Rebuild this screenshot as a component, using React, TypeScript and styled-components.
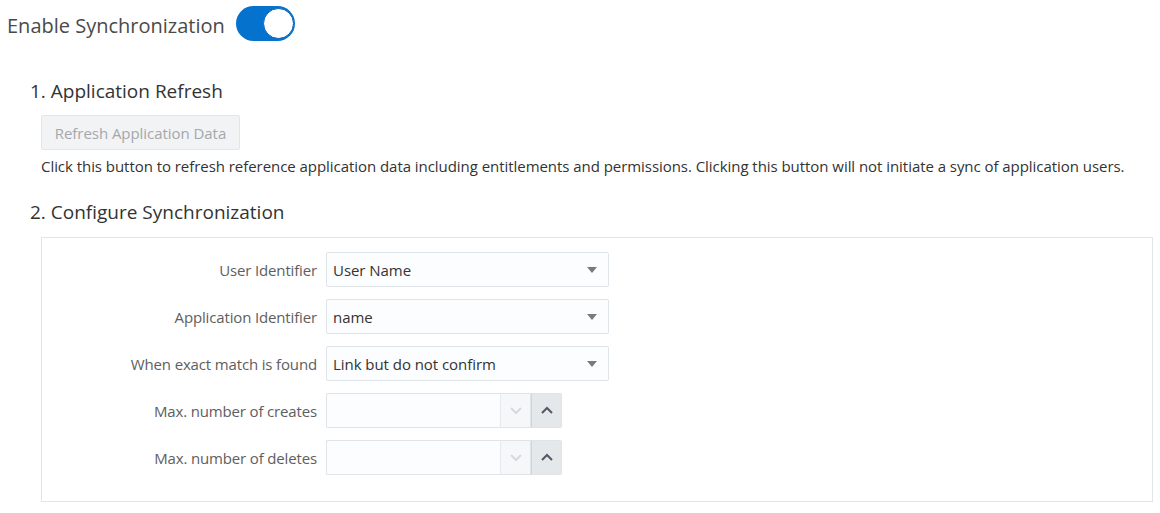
import React from "react";
import styled, { createGlobalStyle } from "styled-components";

const Global = createGlobalStyle`
  html, body { margin: 0; padding: 0; background: #ffffff; }
  body { font-family: "Open Sans", "Noto Sans", sans-serif; color: #333333; }
  * { box-sizing: border-box; }
`;

const Page = styled.div`
  width: 1160px;
  padding: 1px 7px 0 7px;
`;

const Header = styled.div`
  display: flex;
  align-items: center;
  gap: 11px;
  height: 44px;
`;

const Title = styled.h1`
  margin: 0;
  padding-top: 4px;
  font-size: 20px;
  font-weight: 400;
  color: #4a4a4a;
  letter-spacing: 0;
`;

const Toggle = styled.div<{ $on: boolean }>`
  position: relative;
  width: 59px;
  height: 35px;
  border-radius: 18px;
  background: ${(p) => (p.$on ? "#0572ce" : "#c4ced7")};
`;

const Knob = styled.span`
  position: absolute;
  top: 2px;
  right: 1px;
  width: 31px;
  height: 31px;
  border-radius: 50%;
  background: #ffffff;
  border: 1px solid #0a64b8;
`;

const Section = styled.section`
  padding-left: 23px;
`;

const Heading = styled.h2<{ $top: number }>`
  margin: ${(p) => p.$top}px 0 0 0;
  font-size: 19px;
  font-weight: 400;
  color: #333333;
  letter-spacing: 0;
  line-height: 24px;
`;

const Body = styled.div`
  padding-left: 11px;
`;

const GhostButton = styled.button`
  display: block;
  margin-top: 12px;
  height: 35px;
  width: 199px;
  border: 1px solid #e2e6ea;
  border-radius: 2px;
  background: #f1f3f5;
  color: #a4a8ac;
  font-family: inherit;
  font-size: 15px;
  letter-spacing: -0.05px;
  padding: 0;
`;

const Description = styled.p`
  margin: 6px 0 0 0;
  font-size: 15px;
  color: #333333;
  letter-spacing: -0.05px;
  line-height: 20px;
  white-space: nowrap;
`;

const Panel = styled.div`
  margin-top: 13px;
  width: 1112px;
  height: 265px;
  border: 1px solid #e0e5ea;
  padding-top: 14px;
  display: grid;
  grid-template-columns: 275px auto;
  grid-auto-rows: 35px;
  row-gap: 12px;
  column-gap: 9px;
  align-items: center;
`;

const Label = styled.label`
  justify-self: end;
  font-size: 15px;
  color: #5e5e5e;
  letter-spacing: -0.15px;
`;

const Select = styled.div`
  width: 283px;
  height: 35px;
  display: flex;
  align-items: center;
  justify-content: space-between;
  padding: 0 11px 0 6px;
  background: #fcfdfe;
  border: 1px solid #dfe4e9;
  border-radius: 2px;
  font-size: 15px;
  color: #333333;
  letter-spacing: -0.05px;
`;

const Caret = styled.span`
  width: 0;
  height: 0;
  border-left: 5px solid transparent;
  border-right: 5px solid transparent;
  border-top: 6px solid #7a7a7a;
`;

const NumberBox = styled.div`
  display: flex;
  height: 35px;
  width: 236px;
`;

const NumberField = styled.div`
  width: 174px;
  height: 35px;
  background: #fcfdfe;
  border: 1px solid #dfe4e9;
  border-right: none;
  border-radius: 2px 0 0 2px;
`;

const StepButton = styled.div<{ $active: boolean }>`
  width: 31px;
  height: 35px;
  display: flex;
  align-items: center;
  justify-content: center;
  background: ${(p) => (p.$active ? "#e5e8eb" : "#f6f7f8")};
  border: 1px solid #dfe4e9;
  border-left: ${(p) => (p.$active ? "1px solid #d0d5da" : "1px solid #e6eaee")};
  border-radius: ${(p) => (p.$active ? "0 2px 2px 0" : "0")};
`;

const Chevron = ({ up, color }: { up: boolean; color: string }) => (
  <svg width="14" height="9" viewBox="0 0 14 9">
    <path
      d={up ? "M2 7 L7 2 L12 7" : "M2 2 L7 7 L12 2"}
      fill="none"
      stroke={color}
      strokeWidth="2"
    />
  </svg>
);

const selects = [
  { label: "User Identifier", value: "User Name" },
  { label: "Application Identifier", value: "name" },
  { label: "When exact match is found", value: "Link but do not confirm" },
];

const numbers = ["Max. number of creates", "Max. number of deletes"];

export default function App() {
  return (
    <>
      <Global />
      <Page>
        <Header>
          <Title>Enable Synchronization</Title>
          <Toggle $on>
            <Knob />
          </Toggle>
        </Header>
        <Section>
          <Heading $top={34}>1. Application Refresh</Heading>
          <Body>
            <GhostButton disabled>Refresh Application Data</GhostButton>
            <Description>
              Click this button to refresh reference application data including entitlements and
              permissions. Clicking this button will not initiate a sync of application users.
            </Description>
          </Body>
          <Heading $top={24}>2. Configure Synchronization</Heading>
          <Body>
            <Panel>
              {selects.map((s) => (
                <React.Fragment key={s.label}>
                  <Label>{s.label}</Label>
                  <Select>
                    <span>{s.value}</span>
                    <Caret />
                  </Select>
                </React.Fragment>
              ))}
              {numbers.map((n) => (
                <React.Fragment key={n}>
                  <Label>{n}</Label>
                  <NumberBox>
                    <NumberField />
                    <StepButton $active={false}>
                      <Chevron up={false} color="#d6dade" />
                    </StepButton>
                    <StepButton $active>
                      <Chevron up color="#4f5a66" />
                    </StepButton>
                  </NumberBox>
                </React.Fragment>
              ))}
            </Panel>
          </Body>
        </Section>
      </Page>
    </>
  );
}
